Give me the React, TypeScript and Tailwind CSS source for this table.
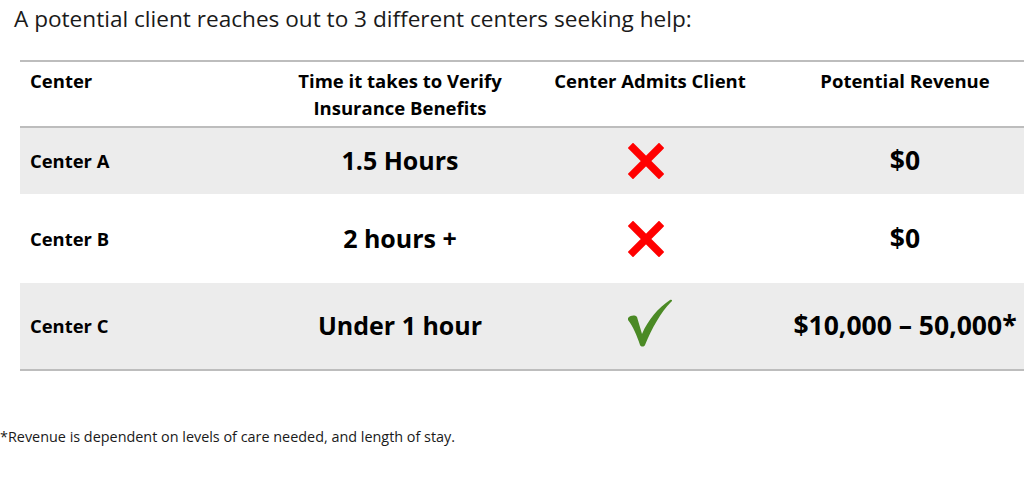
import { Fragment } from 'react';

const font = { fontFamily: '"Open Sans", Carlito, Calibri, sans-serif' };

function RedX() {
  return (
    <svg width="36" height="36" viewBox="0 0 36 36">
      <path d="M5 5 L31 31 M31 5 L5 31" stroke="#ff0000" strokeWidth="7.5" strokeLinecap="square" />
    </svg>
  );
}

function Check() {
  return (
    <svg width="46" height="50" viewBox="-1 -2 46 50" className="-mt-[6px]">
      <path
        d="M0 18 C3 15 7 15 9 17 L14 34 C20 20 30 8 42 0 C44 -1 45 1 43 2 C33 12 24 28 17 45 C16 47 13 47 12 45 C9 36 5 26 0 20 Z"
        fill="#4b8a25"
      />
    </svg>
  );
}

const rows = [
  { name: 'Center A', time: '1.5 Hours', ok: false, rev: '$0', h: 'h-[66px]', bg: 'bg-[#ececec]' },
  { name: 'Center B', time: '2 hours +', ok: false, rev: '$0', h: 'h-[89px]', bg: 'bg-white' },
  { name: 'Center C', time: 'Under 1 hour', ok: true, rev: '$10,000 – 50,000*', h: 'h-[86px]', bg: 'bg-[#ececec]' },
];

export default function App() {
  return (
    <div className="w-[1024px] h-[494px] overflow-hidden bg-white text-black" style={font}>
      <p className="pl-[14px] pt-[4px] text-[22.6px] leading-[30px] text-[#1a1a1a]">
        A potential client reaches out to 3 different centers seeking help:
      </p>
      <div className="ml-[20px] mt-[26px] w-[1015px] border-t-2 border-b-2 border-[#bdbdbd]">
        <div className="grid grid-cols-[255px_250px_250px_260px] h-[66px] border-b-2 border-[#bdbdbd] font-bold text-[18.5px] leading-[27px] pt-[5px]">
          <div className="pl-[10px]">Center</div>
          <div className="text-center">Time it takes to Verify<br />Insurance Benefits</div>
          <div className="text-center">Center Admits Client</div>
          <div className="text-center">Potential Revenue</div>
        </div>
        {rows.map((r) => (
          <Fragment key={r.name}>
            <div className={`grid grid-cols-[255px_250px_250px_260px] items-center ${r.h} ${r.bg}`}>
              <div className="pl-[10px] font-bold text-[18.4px]">{r.name}</div>
              <div className="text-center font-bold text-[25px]">{r.time}</div>
              <div className={`flex justify-center ${r.ok ? '' : 'pr-[8px]'}`}>{r.ok ? <Check /> : <RedX />}</div>
              <div className="text-center font-bold text-[26.5px]">{r.rev}</div>
            </div>
          </Fragment>
        ))}
      </div>
      <p className="mt-[54px] text-[14.4px] leading-[24px] text-[#1a1a1a]">
        *Revenue is dependent on levels of care needed, and length of stay.
      </p>
    </div>
  );
}
